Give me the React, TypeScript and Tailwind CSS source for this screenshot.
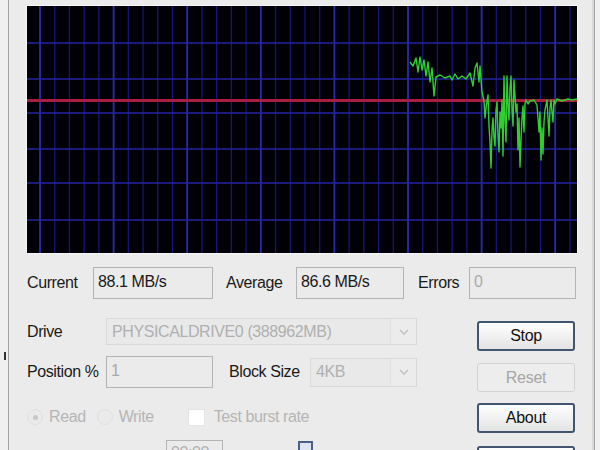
import React from 'react';

const font = { fontFamily: '"Liberation Sans", Arial, sans-serif' };

const trace: [number, number][] = [
  [410, 62], [413, 66], [416, 58], [418, 72], [420, 57], [422, 70], [424, 60], [426, 76], [428, 62],
  [430, 82], [432, 68], [434, 96], [436, 77], [440, 75], [445, 78], [450, 76], [452, 80], [455, 74],
  [458, 79], [462, 76], [466, 79], [470, 73], [473, 86], [475, 68], [477, 63], [479, 82], [480, 66],
  [482, 92], [484, 101], [485, 118], [486, 108], [488, 95], [489, 126], [490, 142], [491, 168],
  [492, 130], [493, 118], [494, 138], [495, 146], [496, 110], [497, 102], [498, 135], [499, 152],
  [500, 112], [501, 128], [502, 100], [503, 156], [504, 76], [505, 120], [506, 142], [507, 76],
  [508, 104], [509, 120], [510, 88], [511, 76], [512, 110], [513, 126], [514, 80], [515, 96],
  [516, 112], [517, 104], [518, 150], [519, 118], [520, 167], [521, 140], [522, 118], [523, 106],
  [524, 132], [525, 104], [526, 100], [528, 104], [530, 101], [534, 100], [537, 105], [538, 118],
  [539, 132], [540, 112], [541, 160], [542, 128], [543, 154], [544, 122], [545, 110], [547, 100],
  [548, 118], [549, 136], [550, 108], [551, 100], [552, 112], [553, 122], [554, 100], [555, 104],
  [557, 99], [562, 101], [568, 99], [572, 100], [577, 99],
];

function Graph() {
  const left = 27;
  const top = 6;
  const vLines = Array.from({ length: 38 }, (_, i) => i);
  const hLines = [43, 79, 113, 149, 183, 220];
  const pts = trace.map(([x, y]) => `${x - left},${y - top}`).join(' ');
  return (
    <div className="ml-[-1px] w-[552px] border border-[#f7f7f7] bg-[#000006]">
      <svg width="550" height="247" className="block">
        {vLines.map((i) => {
          const x = 13 + i * 14.72;
          if (x > 550) return null;
          const major = i % 5 === 0;
          return (
            <line
              key={i}
              x1={x}
              x2={x}
              y1={0}
              y2={247}
              stroke={major ? '#2a2ab8' : '#15157a'}
              strokeWidth={major ? 1.8 : 1.3}
            />
          );
        })}
        {hLines.map((y) => (
          <line key={y} x1={0} x2={550} y1={y - top} y2={y - top} stroke="#2424a4" strokeWidth={1.6} />
        ))}
        <line x1={0} x2={550} y1={94.5} y2={94.5} stroke="#a81e40" strokeWidth={3} />
        <polyline points={pts} fill="none" stroke="#2fcf2f" strokeWidth={1.4} strokeLinejoin="round" />
      </svg>
    </div>
  );
}

function Field({ text, w, h, disabled }: { text: string; w: string; h: string; disabled?: boolean }) {
  return (
    <div
      className={`${w} ${h} border border-[#b4b4b4] bg-[#ebebeb] pl-[4px] pt-[2px] text-[16px] tracking-[-0.4px] ${
        disabled ? 'text-[#a9a9a9]' : 'text-[#1a1a1a]'
      }`}
    >
      {text}
    </div>
  );
}

function Combo({ text, w, h }: { text: string; w: string; h: string }) {
  return (
    <div className={`${w} ${h} flex items-center border border-[#dadada] bg-[#e9e9e9]`}>
      <span className="flex-1 pl-[5px] text-[16px] tracking-[-0.4px] text-[#b0b0b0]">{text}</span>
      <span className="flex h-full w-[26px] items-center justify-center border-l border-[#e2e2e2] bg-[#ececec]">
        <svg width="12" height="8" viewBox="0 0 12 8">
          <path d="M2 2 L6 6 L10 2" fill="none" stroke="#c4c4c4" strokeWidth="1.6" />
        </svg>
      </span>
    </div>
  );
}

function Button({ label, h, disabled }: { label: string; h: string; disabled?: boolean }) {
  return (
    <div
      className={`flex w-[98px] ${h} items-center justify-center rounded-[3px] text-[16px] tracking-[-0.3px] ${
        disabled
          ? 'border border-[#d2d2d2] bg-[#ededed] text-[#a6a6a6]'
          : 'border-2 border-[#43546e] bg-gradient-to-b from-[#ffffff] to-[#e3e3e3] text-[#111]'
      }`}
    >
      {label}
    </div>
  );
}

export default function App() {
  return (
    <div className="relative h-[450px] w-[600px] overflow-hidden bg-[#f0f0f0]" style={font}>
      <div className="absolute left-[4px] top-[352px] h-[8px] w-[2px] bg-[#333]" />
      <div className="ml-[8px] h-[450px] w-[587px] border-x border-[#a3a3a3] bg-[#ebebeb]">
        <div className="h-full border-r-2 border-[#d8d8d8] pl-[18px] pt-[5px]">
          <Graph />

          <div className="mt-[13px] flex h-[32px] items-center text-[16px] tracking-[-0.4px] text-[#1a1a1a]">
            <span className="w-[66px]">Current</span>
            <Field text="88.1 MB/s" w="w-[120px]" h="h-[32px]" />
            <span className="ml-[13px] w-[70px]">Average</span>
            <Field text="86.6 MB/s" w="w-[108px]" h="h-[32px]" />
            <span className="ml-[14px] w-[51px]">Errors</span>
            <Field text="0" w="w-[107px]" h="h-[32px]" disabled />
          </div>

          <div className="mt-[19px] flex">
            <div className="flex w-[390px] flex-col text-[16px] tracking-[-0.4px] text-[#1a1a1a]">
              <div className="flex h-[27px] items-center">
                <span className="w-[79px]">Drive</span>
                <Combo text="PHYSICALDRIVE0 (388962MB)" w="w-[311px]" h="h-[27px]" />
              </div>
              <div className="mt-[11px] flex h-[32px] items-center">
                <span className="w-[79px]">Position %</span>
                <Field text="1" w="w-[107px]" h="h-[32px]" disabled />
                <span className="ml-[16px] w-[81px]">Block Size</span>
                <Combo text="4KB" w="w-[107px]" h="h-[29px]" />
              </div>
              <div className="mt-[17px] flex h-[24px] items-center text-[#b5b5b5]">
                <span className="flex h-[16px] w-[16px] items-center justify-center rounded-full border border-[#e0e0e0] bg-[#eaeaea]">
                  <span className="h-[5px] w-[5px] rounded-full bg-[#c8c8c8]" />
                </span>
                <span className="ml-[6px]">Read</span>
                <span className="ml-[11px] h-[16px] w-[16px] rounded-full border border-[#e0e0e0] bg-[#eaeaea]" />
                <span className="ml-[6px]">Write</span>
                <span className="ml-[34px] h-[17px] w-[17px] border border-[#e4e4e4] bg-white" />
                <span className="ml-[9px]">Test burst rate</span>
              </div>
              <div className="mt-[11px] flex h-[24px] items-start">
                <div className="ml-[139px] h-[24px] w-[57px] border border-[#b4b4b4] pl-[4px] text-[#b0b0b0]">
                  00:00
                </div>
                <span className="ml-[75px] mt-[1px] h-[15px] w-[15px] border-2 border-[#4a5f86] bg-[#dfe6f2]" />
              </div>
            </div>
            <div className="ml-[60px] mt-[3px] flex flex-col">
              <Button label="Stop" h="h-[30px]" />
              <div className="mt-[12px]">
                <Button label="Reset" h="h-[29px]" disabled />
              </div>
              <div className="mt-[11px]">
                <Button label="About" h="h-[30px]" />
              </div>
              <div className="mt-[13px]">
                <Button label="" h="h-[30px]" />
              </div>
            </div>
          </div>
        </div>
      </div>
    </div>
  );
}
